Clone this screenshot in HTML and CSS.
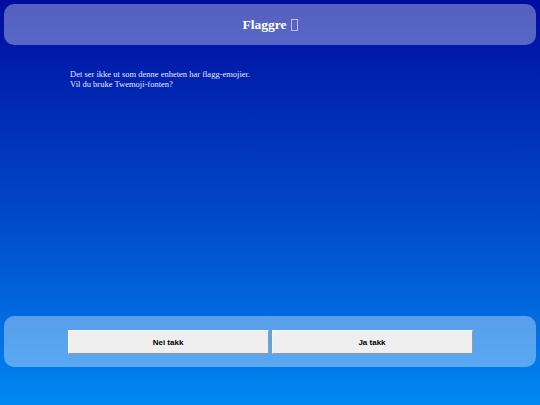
FILE: index.html
```html
<!DOCTYPE html>
<html lang="no">
<head>
<meta charset="utf-8">
<title>Flaggre</title>
<link rel="stylesheet" href="styles.css">
</head>
<body>
<div class="app">
  <header class="topbar">
    <h1 class="title">Flaggre <span class="tofu" aria-hidden="true"></span></h1>
  </header>
  <main class="content">
    <p class="message">Det ser ikke ut som denne enheten har flagg-emojier.<br>Vil du bruke Twemoji-fonten?</p>
  </main>
  <footer class="actions">
    <div class="buttons">
      <button class="btn">Nei takk</button>
      <button class="btn">Ja takk</button>
    </div>
  </footer>
</div>
</body>
</html>
```
FILE: styles.css
```css
html, body {
  margin: 0;
  padding: 0;
  height: 100%;
}
body {
  background: linear-gradient(to bottom, #000c9e 0%, #0044c8 50%, #0088f2 100%);
  font-family: "Liberation Serif", "Times New Roman", serif;
  color: #fff;
}
.app {
  display: flex;
  flex-direction: column;
  height: 405px;
}
.topbar {
  margin: 4px 4px 0;
  height: 41px;
  border-radius: 10px;
  background: rgba(255, 255, 255, 0.34);
  display: flex;
  align-items: center;
  justify-content: center;
}
.title {
  margin: 0;
  font-size: 13.5px;
  font-weight: bold;
  color: #fff;
  display: flex;
  align-items: center;
  gap: 4px;
}
.tofu {
  display: inline-block;
  width: 5px;
  height: 10px;
  border: 1px solid rgba(255, 255, 255, 0.6);
}
.content {
  flex: 1;
  padding: 24px 70px 0;
}
.message {
  margin: 0;
  font-size: 8.5px;
  line-height: 10px;
  color: #e6e8ff;
}
.actions {
  margin: 0 4px 38px;
  height: 51px;
  border-radius: 10px;
  background: rgba(255, 255, 255, 0.35);
  display: flex;
  justify-content: center;
  align-items: flex-start;
  padding-top: 14px;
  box-sizing: border-box;
}
.buttons {
  display: flex;
  gap: 3px;
}
.btn {
  width: 201px;
  height: 24px;
  background: #efefef;
  border: 1px solid;
  border-color: #f8f8f8 #9a9a9a #9a9a9a #f8f8f8;
  font-family: "Liberation Sans", Arial, sans-serif;
  font-weight: bold;
  font-size: 8px;
  color: #000;
  padding: 0;
}
```
